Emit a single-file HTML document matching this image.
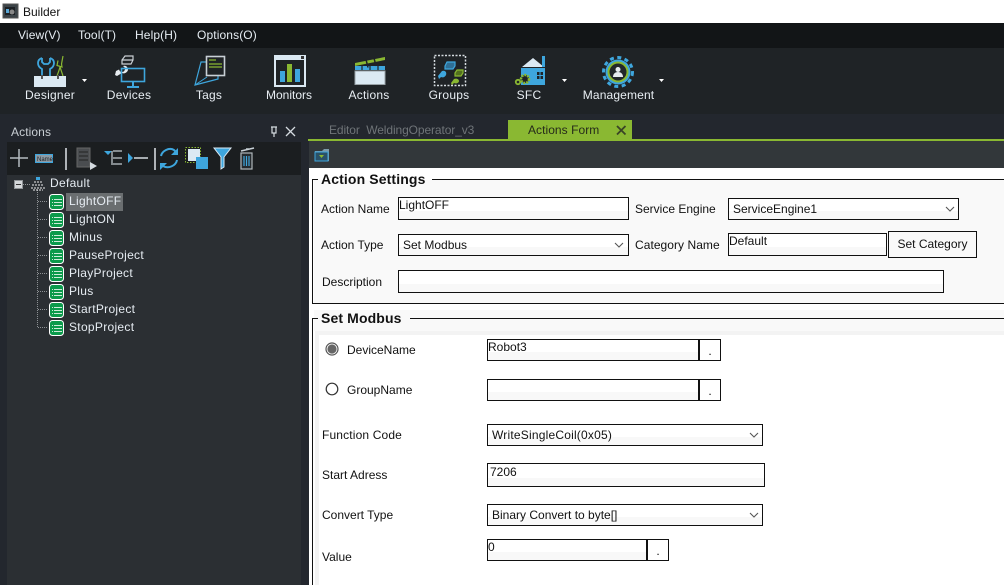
<!DOCTYPE html>
<html><head><meta charset="utf-8"><style>
html,body{margin:0;padding:0;width:1004px;height:585px;overflow:hidden;background:#fff}
body{position:relative;font-family:"Liberation Sans",sans-serif;font-size:12px}
.a{position:absolute}
.t{position:absolute;white-space:nowrap;line-height:14px}
.m{color:#e6edf3;top:28px;letter-spacing:.12px}
.l{color:#e8eef3;top:88px;transform:translateX(-50%);letter-spacing:.25px}
.n{color:#e6ecf2;left:69px;letter-spacing:.3px}
.f{color:#111}
.b{position:absolute;box-sizing:border-box;border:1px solid #111;background:#fff;box-shadow:inset 0 -8px 0 #f8f8f8}
.c{background:#fff;box-shadow:none;text-align:center;line-height:23px;color:#111}
.v{position:absolute;left:0;top:0;color:#111;white-space:nowrap;line-height:14px}
.s{left:4px;top:3px}
.h{position:absolute;font-weight:bold;font-size:14px;color:#111;letter-spacing:.12px;line-height:16px;white-space:nowrap}
svg{position:absolute;left:0;top:0}
</style></head><body>
<div class="a" style="left:0;top:23px;width:1004px;height:25px;background:#121517"></div>
<div class="a" style="left:0;top:48px;width:1004px;height:66px;background:#1f2326"></div>
<div class="a" style="left:0;top:114px;width:1004px;height:471px;background:#23272e"></div>
<div class="a" style="left:7px;top:142px;width:294px;height:33px;background:#1b1e20"></div>
<div class="a" style="left:7px;top:175px;width:294px;height:410px;background:#2b2f33"></div>
<div class="a" style="left:305px;top:120px;width:699px;height:19px;background:#23272e"></div>
<div class="a" style="left:508px;top:120px;width:124px;height:19px;background:#8ab832"></div>
<div class="a" style="left:308px;top:139px;width:696px;height:2px;background:#8ab832"></div>
<div class="a" style="left:309px;top:141px;width:695px;height:27px;background:#32373a"></div>
<div class="a" style="left:309px;top:168px;width:695px;height:417px;background:#fff"></div>
<div class="a" style="left:314px;top:180px;width:690px;height:123px;background:#f9f9f9"></div>
<div class="a" style="left:314px;top:310px;width:690px;height:21px;background:#f9f9f9"></div>
<div class="a" style="left:315px;top:331px;width:689px;height:254px;background:#f3f3f3"></div>
<div class="a" style="left:319px;top:335px;width:685px;height:250px;background:#fff"></div>

<div class="t" style="left:23px;top:5px;color:#111">Builder</div>
<div class="t m" style="left:18px">View(V)</div>
<div class="t m" style="left:78px">Tool(T)</div>
<div class="t m" style="left:135px">Help(H)</div>
<div class="t m" style="left:197px">Options(O)</div>

<div class="t l" style="left:50px">Designer</div>
<div class="t l" style="left:129px">Devices</div>
<div class="t l" style="left:209px">Tags</div>
<div class="t l" style="left:289px;letter-spacing:0">Monitors</div>
<div class="t l" style="left:369px">Actions</div>
<div class="t l" style="left:449px">Groups</div>
<div class="t l" style="left:529px">SFC</div>
<div class="t l" style="left:618.500px;letter-spacing:.15px">Management</div>

<div class="t" style="left:11px;top:125px;color:#c9cfd4;letter-spacing:.1px">Actions</div>
<div class="t" style="left:329px;top:123px;color:#6f7478;letter-spacing:-.1px">Editor&nbsp; WeldingOperator_v3</div>
<div class="t" style="left:528px;top:123px;color:#252a1a;letter-spacing:.05px">Actions Form</div>

<div class="a" style="left:66px;top:193px;width:57px;height:18px;background:#6a6e70"></div>
<div class="t n" style="left:50px;top:176px">Default</div>
<div class="t n" style="top:194px">LightOFF</div>
<div class="t n" style="top:212px">LightON</div>
<div class="t n" style="top:230px">Minus</div>
<div class="t n" style="top:248px">PauseProject</div>
<div class="t n" style="top:266px">PlayProject</div>
<div class="t n" style="top:284px">Plus</div>
<div class="t n" style="top:302px">StartProject</div>
<div class="t n" style="top:320px">StopProject</div>

<!-- Form -->
<svg width="1004" height="585" shape-rendering="crispEdges">
<path d="M312.500 304V179.500H318M432 179.500H1004M312 303.500H1004M312.500 585V318.500H318M410 318.500H1004" fill="none" stroke="#111" stroke-width="1"/>
</svg>
<div class="h" style="left:321px;top:171px">Action Settings</div>
<div class="h" style="left:321px;top:310px">Set Modbus</div>

<div class="t f" style="left:321px;top:202px">Action Name</div>
<div class="b" style="left:398px;top:197px;width:231px;height:23px"><span class="v">LightOFF</span></div>
<div class="t f" style="left:635px;top:202px">Service Engine</div>
<div class="b" style="left:728px;top:198px;width:231px;height:22px;"><span class="v s">ServiceEngine1</span></div>
<div class="t f" style="left:321px;top:238px">Action Type</div>
<div class="b" style="left:398px;top:234px;width:231px;height:22px"><span class="v s">Set Modbus</span></div>
<div class="t f" style="left:635px;top:238px;letter-spacing:.05px">Category Name</div>
<div class="b" style="left:728px;top:233px;width:159px;height:23px"><span class="v">Default</span></div>
<div class="b" style="left:888px;top:231px;width:89px;height:27px;background:#f9f9f9;box-shadow:none;text-align:center;line-height:25px;color:#111">Set Category</div>
<div class="t f" style="left:322px;top:275px">Description</div>
<div class="b" style="left:398px;top:270px;width:546px;height:23px"></div>

<div class="t f" style="left:347px;top:343px">DeviceName</div>
<div class="b" style="left:487px;top:339px;width:212px;height:22px"><span class="v">Robot3</span></div>
<div class="b c" style="left:699px;top:339px;width:22px;height:22px">.</div>
<div class="t f" style="left:347px;top:383px">GroupName</div>
<div class="b" style="left:487px;top:379px;width:212px;height:22px"></div>
<div class="b c" style="left:699px;top:379px;width:22px;height:22px">.</div>
<div class="t f" style="left:322px;top:428px;letter-spacing:.15px">Function Code</div>
<div class="b" style="left:487px;top:424px;width:276px;height:22px"><span class="v s" style="letter-spacing:.2px">WriteSingleCoil(0x05)</span></div>
<div class="t f" style="left:322px;top:468px">Start Adress</div>
<div class="b" style="left:487px;top:463px;width:278px;height:24px"><span class="v" style="left:2px;top:1px">7206</span></div>
<div class="t f" style="left:322px;top:508px">Convert Type</div>
<div class="b" style="left:487px;top:504px;width:276px;height:22px"><span class="v s">Binary Convert to byte[]</span></div>
<div class="t f" style="left:322px;top:550px">Value</div>
<div class="b" style="left:487px;top:539px;width:160px;height:22px"><span class="v">0</span></div>
<div class="b c" style="left:647px;top:539px;width:22px;height:22px">.</div>

<svg width="1004" height="585">
<!-- window icon -->
<rect x="3" y="4" width="15" height="14" fill="#3c4348" stroke="#555" />
<rect x="5" y="7" width="10" height="8" fill="#1c2024"/><rect x="6" y="9" width="3" height="4" fill="#5aa7d6"/><circle cx="12" cy="12" r="2.500" fill="#888"/>
<!-- dropdown chevrons -->
<path d="M946 207l4 4 4-4M615 243l4 4 4-4M750 433l4 4 4-4M750 513l4 4 4-4" fill="none" stroke="#555" stroke-width="1.100"/>
<!-- radios -->
<circle cx="332" cy="349" r="6" fill="#fff" stroke="#555" stroke-width="1.200"/><circle cx="332" cy="349" r="4.600" fill="#666"/>
<circle cx="332" cy="389" r="5.800" fill="#fff" stroke="#333" stroke-width="1.200"/>

<!-- Designer -->
<path d="M42 58c-3 1-4 3-4 5 0 3 2 5 4 6v7M50 58c3 1 4 3 4 5 0 3-2 5-4 6v7M42 58v4l2 2h4l2-2v-4" fill="none" stroke="#3ea6dd" stroke-width="1.800"/>
<path d="M57 76c1-3 2-5 3-9M63 56l-1.500 8 .5 3-5-1.500 1-5M60 67l3 9" fill="none" stroke="#8ab832" stroke-width="1.200"/>
<rect x="34" y="76" width="32" height="11" fill="#dbe9f3"/>
<rect x="41" y="75" width="2" height="4" fill="#555"/><rect x="57" y="75" width="2" height="4" fill="#555"/>
<path d="M82 79h5l-2.500 3z" fill="#fff"/>
<!-- Devices -->
<path d="M122 60l3-4h8v4l-2 4h-9z" fill="none" stroke="#c9cfd4" stroke-width="1.200"/>
<path d="M122 60h11" stroke="#d5dbe0" stroke-width="1.200"/>
<path d="M116 71l6-3 1-2c3-1 5 1 5 4-1 3-4 4-6 3l-5 3-2-1z" fill="#e6ebef"/>
<circle cx="122" cy="69" r="3" fill="#1f2326"/>
<rect x="121.500" y="68.500" width="23" height="13" fill="none" stroke="#3ea6dd" stroke-width="1.600"/>
<path d="M133 82v4M127 87h12" stroke="#3ea6dd" stroke-width="2"/>
<!-- Tags -->
<path d="M201 62l-6 23 23-6V62z" fill="none" stroke="#3ea6dd" stroke-width="1.200"/>
<path d="M195 85l12-8" stroke="#3ea6dd" stroke-width="1"/>
<rect x="206.500" y="56.500" width="18" height="19" fill="#1f2326" stroke="#c8d0d6" stroke-width="1.600"/>
<path d="M209 60h7M209 64h13M209 67h13" stroke="#8ab832" stroke-width="1.200"/>
<!-- Monitors -->
<rect x="274" y="55" width="32" height="32" fill="#dbe9f3"/>
<rect x="276" y="60" width="28" height="25" fill="#1f2326"/>
<rect x="280" y="71" width="5" height="11" fill="#3ea6dd"/><rect x="287" y="64" width="5" height="18" fill="#8ab832"/><rect x="295" y="69" width="5" height="13" fill="#3ea6dd"/>
<rect x="301" y="56" width="3" height="3" fill="#333"/>
<!-- Actions -->
<path d="M355 63l30-6v3l-30 6z" fill="#8ab832"/>
<rect x="355" y="66" width="30" height="4" fill="#3ea6dd"/>
<rect x="355" y="71" width="30" height="13.500" fill="#dbe9f3" stroke="#9aa3a8"/>
<path d="M366 59.500l2 8M374 58l2 8" stroke="#1f2326" stroke-width="1.500"/>
<path d="M362 66v4M370 66v4M378 66v4" stroke="#1f2326" stroke-width="1.200"/>
<!-- Groups -->
<rect x="434.500" y="55.500" width="31" height="30" fill="none" stroke="#d5dbe0" stroke-width="1.500" stroke-dasharray="2 1.500"/>
<path d="M445 66l2-4h8v4l-2 3h-8z" fill="#2f6f95" stroke="#3ea6dd" stroke-width="1.200"/>
<path d="M438 76l4-5c3-1 5 1 4 4-1 2-3 3-5 2l-2 2z" fill="#3ea6dd"/>
<path d="M455 73l2-3h6v3l-2 3h-6z" fill="#53701f" stroke="#8ab832" stroke-width="1.200"/>
<path d="M451 83l3-4c2-1 5 0 5 2s-3 3-5 2l-2 2z" fill="#8ab832"/>
<!-- SFC -->
<path d="M522 67l11-9 11 9z" fill="#dbe9f3"/>
<rect x="542" y="56" width="3" height="11" fill="#3ea6dd"/>
<rect x="521" y="68" width="24" height="17" fill="#3ea6dd"/>
<rect x="537" y="72" width="6" height="7" fill="#1f2326"/>
<path d="M540 72v7M537 75.500h6" stroke="#3ea6dd"/>
<circle cx="525" cy="79" r="4" fill="#1f2326" stroke="#8ab832" stroke-width="2.500" stroke-dasharray="2 1"/>
<circle cx="518" cy="82" r="2.200" fill="none" stroke="#8ab832" stroke-width="1.800"/>
<path d="M562 79h5l-2.500 3zM659 79h5l-2.500 3z" fill="#fff"/>
<!-- Management -->
<circle cx="618" cy="72" r="12.500" fill="#3ea6dd"/>
<circle cx="618" cy="72" r="14.500" fill="none" stroke="#3ea6dd" stroke-width="3" stroke-dasharray="4 3.500"/>
<circle cx="618" cy="72" r="9.500" fill="#22272a" stroke="#8ab832" stroke-width="2"/>
<circle cx="618" cy="69.500" r="2.500" fill="#e6ebef"/><path d="M613 77c0-3 2-5 5-5s5 2 5 5z" fill="#e6ebef"/>

<!-- panel title icons -->
<path d="M271 127h6M272 127v6h4v-6M274 133v4" fill="none" stroke="#d5dbe0" stroke-width="1.200"/>
<path d="M286 127l9 9M295 127l-9 9" stroke="#d5dbe0" stroke-width="1.300"/>
<path d="M617 126l8.500 8.500M625.500 126l-8.500 8.500" stroke="#3a4426" stroke-width="1.800"/>

<!-- left toolbar -->
<path d="M19 149v18M10 158h18" stroke="#b5bbbf" stroke-width="1.500"/>
<rect x="35.500" y="154.500" width="17" height="8" fill="#8d9ba5" stroke="#3ea6dd"/>
<text x="37" y="161" font-size="6" fill="#222" font-family="Liberation Sans">Name</text>
<path d="M66 148v22M155 148v22" stroke="#dfe4e8" stroke-width="1.500"/>
<rect x="77" y="148" width="13" height="19" fill="#4a4d50" stroke="#666"/>
<path d="M79 152h9M79 156h9M79 160h9" stroke="#222"/>
<path d="M90 162l7 4-7 4z" fill="#d5dbe0"/>
<path d="M104 151h8l-4 4z" fill="#3ea6dd"/>
<path d="M113 151h9M113 158h9M113 164h9M112 151v14" stroke="#a8aeb2" stroke-width="1.500" fill="none"/>
<path d="M128 153v10l5-5z" fill="#3ea6dd"/>
<path d="M134 158h14" stroke="#d5dbe0" stroke-width="1.500"/>
<path d="M161 156c1-5 8-9 13-6l2 2M177 160c-1 6-9 9-14 6l-2-2" fill="none" stroke="#3ea6dd" stroke-width="2"/>
<path d="M178 148v7h-7zM160 170v-7h7z" fill="#3ea6dd"/>
<rect x="185.500" y="147.500" width="15" height="15" fill="none" stroke="#8ab832" stroke-dasharray="1.500 1.500"/>
<rect x="188" y="149" width="12" height="12" fill="#dbe9f3"/>
<rect x="196" y="157" width="12" height="12" fill="#3ea6dd"/>
<path d="M214 148h17l-7 9v10l-3 2v-12z" fill="#3ea6dd" stroke="#dbe9f3" stroke-width="1"/>
<path d="M241 151l13-3M246 149h3" stroke="#c8d0d6" stroke-width="1.500"/>
<rect x="241" y="153" width="11" height="16" fill="#252a2d" stroke="#b0b7bb" stroke-width="1.200"/>
<path d="M244 156v10M246.500 156v10M249 156v10" stroke="#3ea6dd" stroke-width="1.200"/>

<!-- tab toolbar icon -->
<path d="M315 151h7l2-2h5v12h-14z" fill="#7d9aa8"/>
<rect x="315" y="152" width="13" height="9" fill="#2a5168" stroke="#3ea6dd"/>
<path d="M319 155h5l-2.500 3z" fill="#8ab832"/>

<!-- tree lines -->
<path d="M37.500 190V327.500M38 201.500H48M38 219.500H48M38 237.500H48M38 255.500H48M38 273.500H48M38 291.500H48M38 309.500H48M38 327.500H48" fill="none" stroke="#8e9295" stroke-dasharray="1 1" shape-rendering="crispEdges"/>
<rect x="14.500" y="180.500" width="8" height="8" fill="#d5d8da" stroke="#8f9396" shape-rendering="crispEdges"/>
<path d="M16 184.500h5" stroke="#333" shape-rendering="crispEdges"/>
<path d="M23 184.500h7" stroke="#8e9295" stroke-dasharray="1 1" shape-rendering="crispEdges"/>
<!-- Default tree icon -->
<rect x="36" y="177" width="4" height="3" fill="#3ea6dd"/>
<path d="M34 182h9M32 185h12M31 188h14M33 190h10" stroke="#eee" stroke-width="1" stroke-dasharray="2 1"/>
<!-- action icons -->
<g id="g">
<rect x="49.500" y="194.500" width="14" height="15" rx="3" fill="#0b9a4b" stroke="#fff"/>
<path d="M52 199.500h1M54 199.500h8M52 202.500h1M54 202.500h8M52 205.500h1M54 205.500h8" stroke="#cdebd9"/>
</g>
<use href="#g" y="18"/><use href="#g" y="36"/><use href="#g" y="54"/><use href="#g" y="72"/><use href="#g" y="90"/><use href="#g" y="108"/><use href="#g" y="126"/>
</svg>
</body></html>
